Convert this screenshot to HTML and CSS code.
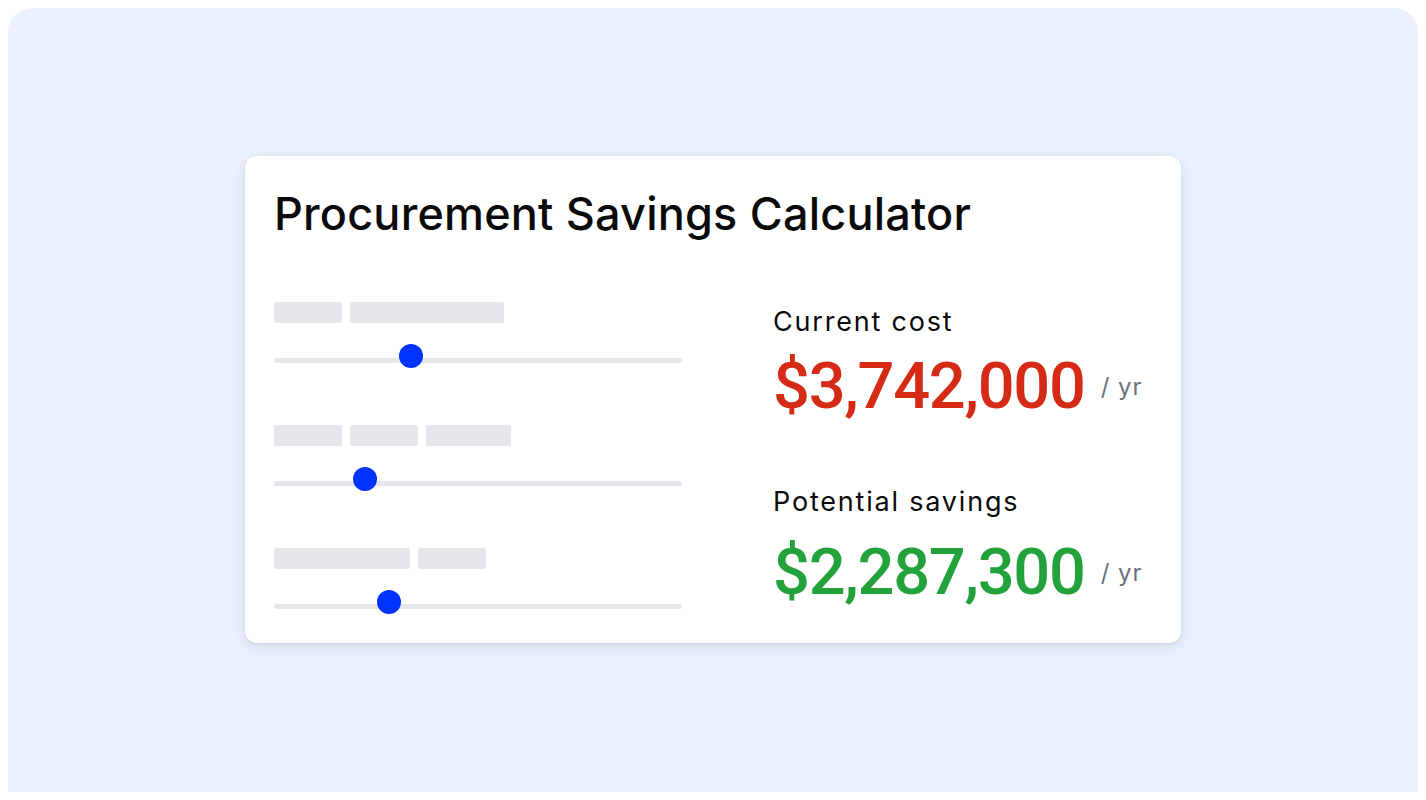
FILE: index.html
```html
<!DOCTYPE html>
<html lang="en">
<head>
<meta charset="utf-8">
<title>Procurement Savings Calculator</title>
<link rel="stylesheet" href="styles.css">
</head>
<body>
<main class="stage">
  <section class="card">
    <h1 class="title">Procurement Savings Calculator</h1>
    <div class="content">
      <div class="controls">
        <div class="control">
          <div class="labels">
            <span class="sk" style="width:68px"></span>
            <span class="sk" style="width:154px"></span>
          </div>
          <div class="slider"><span class="thumb" style="left:137px"></span></div>
        </div>
        <div class="control">
          <div class="labels">
            <span class="sk" style="width:68px"></span>
            <span class="sk" style="width:68px"></span>
            <span class="sk" style="width:85px"></span>
          </div>
          <div class="slider"><span class="thumb" style="left:91px"></span></div>
        </div>
        <div class="control">
          <div class="labels">
            <span class="sk" style="width:136px"></span>
            <span class="sk" style="width:68px"></span>
          </div>
          <div class="slider"><span class="thumb" style="left:115px"></span></div>
        </div>
      </div>
      <div class="results">
        <div class="result">
          <div class="result-label">Current cost</div>
          <div class="result-value"><span class="amount cost">$3,742,000</span><span class="unit">/ yr</span></div>
        </div>
        <div class="result result-savings">
          <div class="result-label">Potential savings</div>
          <div class="result-value"><span class="amount savings">$2,287,300</span><span class="unit">/ yr</span></div>
        </div>
      </div>
    </div>
  </section>
</main>
</body>
</html>
```
FILE: styles.css
```css
html, body {
  margin: 0;
  padding: 0;
  background: #ffffff;
}
body {
  padding: 8px;
  box-sizing: border-box;
  height: 800px;
  overflow: hidden;
  font-family: "Inter", "Liberation Sans", sans-serif;
}
.stage {
  background: #ebf1fc;
  border-radius: 24px 24px 0 0;
  height: 784px;
  display: flex;
  justify-content: center;
  padding-top: 148px;
  box-sizing: border-box;
}
.card {
  width: 936px;
  height: 487px;
  background: #ffffff;
  border-radius: 12px;
  box-shadow: 0 4px 14px rgba(40, 60, 120, 0.12), 0 1px 3px rgba(40, 60, 120, 0.08);
  box-sizing: border-box;
  padding: 30px 28px 0 29px;
}
.title {
  margin: 0;
  font-size: 45px;
  font-weight: 500;
  line-height: 56px;
  color: #0a0a0a;
  letter-spacing: 0.2px;
}
.content {
  display: flex;
  margin-top: 60px;
}
.controls {
  width: 408px;
  flex-shrink: 0;
  display: flex;
  flex-direction: column;
  gap: 62px;
}
.control {
  display: flex;
  flex-direction: column;
}
.labels {
  display: flex;
  gap: 8px;
  height: 21px;
}
.sk {
  display: block;
  height: 21px;
  background: #e5e7eb;
  border-radius: 2px;
}
.slider {
  position: relative;
  margin-top: 35px;
  height: 5px;
  background: #e5e7eb;
  border-radius: 3px;
}
.thumb {
  position: absolute;
  top: -14px;
  width: 24px;
  height: 24px;
  margin-left: -12px;
  border-radius: 50%;
  background: #0033ff;
}
.results {
  margin-left: 91px;
  flex-shrink: 0;
  display: flex;
  flex-direction: column;
  gap: 64px;
  padding-top: 4px;
}
.result-label {
  font-size: 27px;
  line-height: 32px;
  color: #0a0a0a;
  letter-spacing: 1.8px;
}
.result-value {
  display: flex;
  align-items: center;
  gap: 16px;
  margin-top: 12px;
  white-space: nowrap;
}
.result-savings .result-value {
  margin-top: 18px;
}
.amount {
  font-family: "Roboto", "Inter", sans-serif;
  font-size: 65px;
  line-height: 72px;
  font-weight: 500;
  letter-spacing: -1.3px;
}
.cost { color: #d42a16; }
.savings { color: #23a23b; }
.unit {
  font-size: 24px;
  line-height: 30px;
  color: #6b7280;
  letter-spacing: 1px;
  padding-top: 2px;
}
```
